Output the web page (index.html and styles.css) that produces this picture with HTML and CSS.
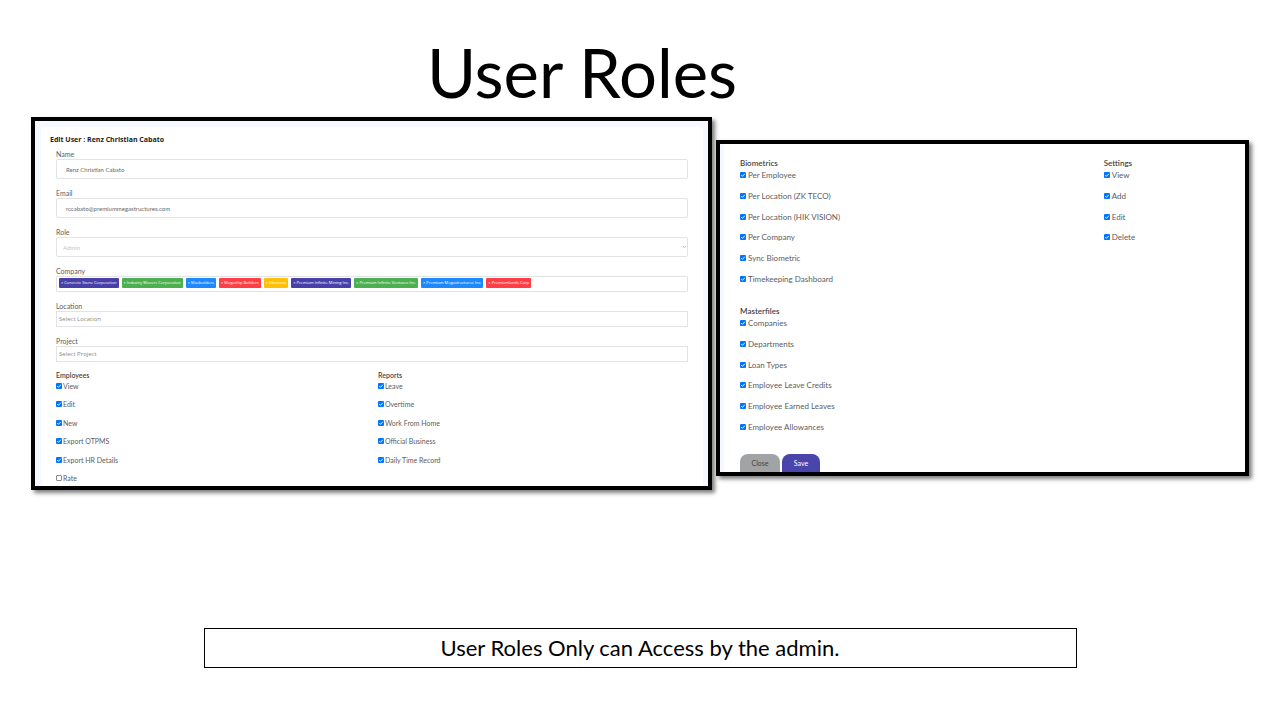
FILE: index.html
```html
<!DOCTYPE html>
<html lang="en">
<head>
<meta charset="utf-8">
<title>User Roles</title>
<link rel="stylesheet" href="styles.css">
</head>
<body>
<main class="slide">
  <h1 class="title">User Roles</h1>
  <div class="panels">
    <section class="panel panel-form">
      <form class="card">
        <h2 class="card-title">Edit User : Renz Christian Cabato</h2>
        <div class="fields">
          <div class="field"><label for="name">Name</label><input class="control" id="name" type="text" value="Renz Christian Cabato"></div>
          <div class="field"><label for="email">Email</label><input class="control" id="email" type="email" value="rccabato@premiummegastructures.com"></div>
          <div class="field"><label for="role">Role</label>
            <div class="select-wrap">
              <select class="control control-select" id="role" disabled><option>Admin</option></select>
              <svg class="chevron" viewBox="0 0 6 4"><path d="M1 .8 3 2.8 5 .8" fill="none" stroke="#b5b5b5" stroke-width="1.2"/></svg>
            </div>
          </div>
          <div class="field"><span class="label" id="company">Company</span>
            <div class="tags" role="group" aria-labelledby="company">
              <button type="button" class="tag indigo">× Concrete Stone Corporation</button>
              <button type="button" class="tag green">× Industry Movers Corporation</button>
              <button type="button" class="tag blue">× Macbuilders</button>
              <button type="button" class="tag red">× Megaship Builders</button>
              <button type="button" class="tag amber">× Obanana</button>
              <button type="button" class="tag indigo">× Premium Infinite Mining Inc.</button>
              <button type="button" class="tag green">× Premium Infinite Ventures Inc.</button>
              <button type="button" class="tag blue">× Premium Megastructures Inc.</button>
              <button type="button" class="tag red">× Premiumlands Corp</button>
            </div>
          </div>
          <div class="field"><label for="location">Location</label><input class="control control-small" id="location" type="text" placeholder="Select Location"></div>
          <div class="field"><label for="project">Project</label><input class="control control-small" id="project" type="text" placeholder="Select Project"></div>
        </div>
        <div class="columns columns-even">
          <section>
            <h3 class="group-title">Employees</h3>
            <div class="checks">
              <label class="check"><input type="checkbox" checked>View</label>
              <label class="check"><input type="checkbox" checked>Edit</label>
              <label class="check"><input type="checkbox" checked>New</label>
              <label class="check"><input type="checkbox" checked>Export OTPMS</label>
              <label class="check"><input type="checkbox" checked>Export HR Details</label>
              <label class="check"><input type="checkbox">Rate</label>
            </div>
          </section>
          <section>
            <h3 class="group-title">Reports</h3>
            <div class="checks">
              <label class="check"><input type="checkbox" checked>Leave</label>
              <label class="check"><input type="checkbox" checked>Overtime</label>
              <label class="check"><input type="checkbox" checked>Work From Home</label>
              <label class="check"><input type="checkbox" checked>Official Business</label>
              <label class="check"><input type="checkbox" checked>Daily Time Record</label>
            </div>
          </section>
        </div>
      </form>
    </section>
    <section class="panel panel-access">
      <form class="card card-access">
        <div class="columns columns-wide">
          <section>
            <h3 class="group-title">Biometrics</h3>
            <div class="checks">
              <label class="check"><input type="checkbox" checked>Per Employee</label>
              <label class="check"><input type="checkbox" checked>Per Location (ZK TECO)</label>
              <label class="check"><input type="checkbox" checked>Per Location (HIK VISION)</label>
              <label class="check"><input type="checkbox" checked>Per Company</label>
              <label class="check"><input type="checkbox" checked>Sync Biometric</label>
              <label class="check"><input type="checkbox" checked>Timekeeping Dashboard</label>
            </div>
          </section>
          <section>
            <h3 class="group-title">Settings</h3>
            <div class="checks">
              <label class="check"><input type="checkbox" checked>View</label>
              <label class="check"><input type="checkbox" checked>Add</label>
              <label class="check"><input type="checkbox" checked>Edit</label>
              <label class="check"><input type="checkbox" checked>Delete</label>
            </div>
          </section>
          <section>
            <h3 class="group-title">Masterfiles</h3>
            <div class="checks">
              <label class="check"><input type="checkbox" checked>Companies</label>
              <label class="check"><input type="checkbox" checked>Departments</label>
              <label class="check"><input type="checkbox" checked>Loan Types</label>
              <label class="check"><input type="checkbox" checked>Employee Leave Credits</label>
              <label class="check"><input type="checkbox" checked>Employee Earned Leaves</label>
              <label class="check"><input type="checkbox" checked>Employee Allowances</label>
            </div>
          </section>
        </div>
        <div class="actions">
          <button type="button" class="btn btn-close">Close</button>
          <button type="button" class="btn btn-save">Save</button>
        </div>
      </form>
    </section>
  </div>
  <p class="note">User Roles Only can Access by the admin.</p>
</main>
</body>
</html>
```
FILE: styles.css
```css
* { box-sizing: border-box; margin: 0; }
body { background: #fff; color: #000; font-family: Lato, "Open Sans", sans-serif; }
input, select, button { font-family: inherit; }

.slide { display: flex; flex-direction: column; padding: 28px 31px 0; }
.title { padding: 0 116px 1px 0; font-size: 67px; line-height: 88px; font-weight: 400; text-align: center; }

.panels { display: grid; grid-template-columns: minmax(0, 681fr) minmax(0, 533fr); align-items: start; gap: 4px; color: #5c5d60; }
.panel { border: 4px solid #000; background: #f5f8ff; box-shadow: 3px 3px 4px rgba(0, 0, 0, .5); }
.panel-form { padding: 6px 5px 0 6px; font-size: 7px; }
.panel-access { margin-top: 23px; padding: 0 0 0 4px; font-size: 8px; }

.card { padding: 8px 15px 3px 9px; border-radius: 3px 3px 0 0; background: #fff; }
.card-title { font-family: "Open Sans", sans-serif; font-size: 7px; line-height: 10px; font-weight: 700; color: #222; }
.fields { display: flex; flex-direction: column; gap: 10px; padding: 5px 0 0 6px; }
.field { display: flex; flex-direction: column; }
.field label:first-child, .label { line-height: 9px; }
.control { width: 100%; height: 20px; padding: 0 9px; border: 1px solid #e2e3e6; border-radius: 2px; background: #fff; color: #686a70; font-size: 6px; }
.control-select { padding: 0 6px; appearance: none; opacity: 1; color: #c4c5c8; }
.control-small { height: 16px; padding: 0 2px; border-radius: 0; font-family: "Open Sans", sans-serif; }
.control::placeholder { color: #888; opacity: 1; }
.select-wrap { position: relative; display: flex; }
.chevron { position: absolute; right: 1px; top: 8px; width: 5px; height: 4px; }

.tags { display: flex; align-items: flex-start; gap: 3px; height: 16px; padding: 1px 2px; border: 1px solid #e2e3e6; border-radius: 1px; }
.tag { height: 10px; padding: 0 2px; border: 0; border-radius: 1px; color: #fff; font-family: "Open Sans", sans-serif; font-size: 4px; line-height: 10px; white-space: nowrap; }
.indigo { background: #4840a8; }
.green { background: #4caf50; }
.blue { background: #1e88ff; }
.red { background: #ff3f45; }
.amber { background: #ffc107; }

.columns { display: grid; }
.columns-even { grid-template-columns: 1fr 1fr; padding: 8px 0 0 6px; margin-right: -12px; }
.columns-wide { grid-template-columns: 3fr 1fr; row-gap: 22px; }
.group-title { font-size: inherit; line-height: 10px; font-weight: 600; color: #444; }
.checks { display: grid; align-content: space-between; grid-template-rows: repeat(6, 10px); height: 102px; margin-top: 1px; }
.check { display: flex; align-items: center; gap: 1px; line-height: 10px; }
.check input { appearance: none; width: 6px; height: 6px; margin: 0; border: 1px solid #8a8a8a; border-radius: 1px; background: #fff; }
.check input:checked { border: 0; background: url("data:image/svg+xml,%3Csvg xmlns='http://www.w3.org/2000/svg' viewBox='0 0 12 12'%3E%3Cpath d='M2.5 6.2 5 8.7 9.7 3.5' fill='none' stroke='white' stroke-width='1.8'/%3E%3C/svg%3E") center / 100% #0075ff; }

.card-access { padding: 14px 20px 0 16px; border-radius: 0; }
.card-access .checks { height: 114px; margin-top: 2px; }
.card-access .check { gap: 2px; }
.actions { display: flex; gap: 2px; padding-top: 22px; }
.btn { height: 18px; border: 0; border-radius: 8px 8px 0 0; font-size: 7px; }
.btn-close { width: 40px; background: #a2a3a5; color: #444; }
.btn-save { width: 38px; background: #4a45aa; color: #fff; }

.note { align-self: center; width: 873px; max-width: 100%; margin-top: 138px; padding-bottom: 1px; border: 1px solid #000; font-size: 22px; line-height: 37px; text-align: center; }
```
